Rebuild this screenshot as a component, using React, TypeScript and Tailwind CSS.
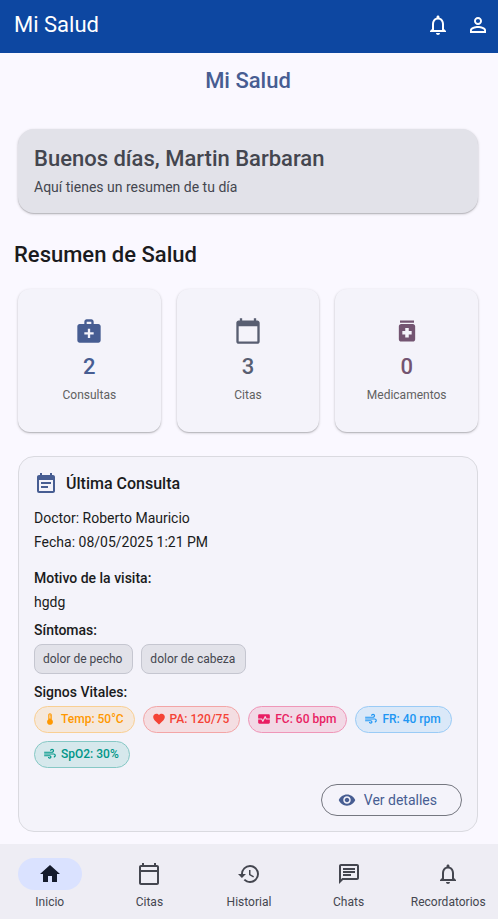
import type { ReactNode } from "react";
import type { IconType } from "react-icons";
import {
    MdAir,
    MdCalendarToday,
    MdDeviceThermostat,
    MdEventNote,
    MdFavorite,
    MdHistory,
    MdHome,
    MdMedicalServices,
    MdMedication,
    MdMonitorHeart,
    MdNotificationsNone,
    MdOutlineCalendarToday,
    MdOutlineChat,
    MdPersonOutline,
    MdVisibility,
} from "react-icons/md";

type Stat = { label: string; value: number; icon: IconType; color: string };
type Vital = { label: string; icon: IconType; color: string };
type NavItem = { label: string; icon: IconType; active?: boolean };

const stats: Stat[] = [
    { label: "Consultas", value: 2, icon: MdMedicalServices, color: "text-[#475d92]" },
    { label: "Citas", value: 3, icon: MdCalendarToday, color: "text-[#585e71]" },
    { label: "Medicamentos", value: 0, icon: MdMedication, color: "text-[#735471]" },
];

const symptoms = ["dolor de pecho", "dolor de cabeza"];

const vitals: Vital[] = [
    { label: "Temp: 50°C", icon: MdDeviceThermostat, color: "border-[#f9cf93] bg-[#f5e8dc] text-[#ff9800]" },
    { label: "PA: 120/75", icon: MdFavorite, color: "border-[#f3a5a6] bg-[#f4dee2] text-[#f44336]" },
    { label: "FC: 60 bpm", icon: MdMonitorHeart, color: "border-[#ef96b8] bg-[#f2d9e6] text-[#e91e63]" },
    { label: "FR: 40 rpm", icon: MdAir, color: "border-[#9acbf6] bg-[#dae8f8] text-[#2196f3]" },
    { label: "SpO2: 30%", icon: MdAir, color: "border-[#86c8c5] bg-[#d6e8ec] text-[#009688]" },
];

const navItems: NavItem[] = [
    { label: "Inicio", icon: MdHome, active: true },
    { label: "Citas", icon: MdOutlineCalendarToday },
    { label: "Historial", icon: MdHistory },
    { label: "Chats", icon: MdOutlineChat },
    { label: "Recordatorios", icon: MdNotificationsNone },
];

const Header = () => (
    <header className="flex h-[53px] items-center justify-between bg-[#0d47a1] pr-2 pl-3.5 pb-1 text-white">
        <span className="text-[22px] leading-7">Mi Salud</span>
        <div className="flex items-center gap-4">
            <button type="button" aria-label="Notificaciones">
                <MdNotificationsNone className="size-6" />
            </button>
            <button type="button" aria-label="Perfil">
                <MdPersonOutline className="size-6" />
            </button>
        </div>
    </header>
);

const StatCard = ({ stat }: { stat: Stat }) => {
    const Icon = stat.icon;
    return (
        <div className="flex aspect-square flex-col items-center justify-center rounded-xl bg-[#f4f3fa] shadow-[0_1px_3px_rgba(0,0,0,0.2),0_1px_1px_rgba(0,0,0,0.14)]">
            <Icon className={`size-7 ${stat.color}`} />
            <span className={`mt-2 text-[22px] leading-7 font-medium ${stat.color}`}>{stat.value}</span>
            <span className="mt-1.5 text-xs leading-4 text-[#616161]">{stat.label}</span>
        </div>
    );
};

const FieldTitle = ({ children }: { children: ReactNode }) => (
    <h4 className="text-sm leading-5 font-medium text-[#1a1b20]">{children}</h4>
);

const LastVisit = () => (
    <section className="mx-1 mt-6 rounded-2xl border border-[#dadae0] bg-[#f4f3fa] p-[15px]">
        <h3 className="flex items-center gap-2 text-base leading-6 font-medium text-[#1a1b20]">
            <MdEventNote className="size-6 text-[#475d92]" />
            Última Consulta
        </h3>
        <div className="mt-3 space-y-1 text-sm leading-5 text-[#1a1b20]">
            <p>Doctor: Roberto Mauricio</p>
            <p>Fecha: 08/05/2025 1:21 PM</p>
        </div>
        <div className="mt-4 space-y-1">
            <FieldTitle>Motivo de la visita:</FieldTitle>
            <p className="text-sm leading-5 text-[#1a1b20]">hgdg</p>
        </div>
        <div className="mt-2">
            <FieldTitle>Síntomas:</FieldTitle>
            <ul className="mt-1 flex flex-wrap gap-2">
                {symptoms.map((symptom) => (
                    <li key={symptom} className="rounded-lg border border-[#c5c6d0] bg-[#e2e2e9] py-1.5 pr-2.5 pl-2 text-xs leading-4 text-[#44464f]">
                        {symptom}
                    </li>
                ))}
            </ul>
        </div>
        <div className="mt-2">
            <FieldTitle>Signos Vitales:</FieldTitle>
            <ul className="mt-1 flex flex-wrap gap-2">
                {vitals.map(({ label, icon: Icon, color }) => (
                    <li key={label} className={`flex h-[27px] items-center gap-1 rounded-full border pr-2.5 pl-2 text-xs leading-4 font-medium ${color}`}>
                        <Icon className="size-3.5" />
                        {label}
                    </li>
                ))}
            </ul>
        </div>
        <div className="mt-4 flex justify-end">
            <button type="button" className="flex h-8 items-center gap-2 rounded-full border border-[#757780] pr-6 pl-4 text-sm leading-5 text-[#475d92]">
                <MdVisibility className="size-[18px]" />
                Ver detalles
            </button>
        </div>
    </section>
);

const BottomNav = () => (
    <nav className="bg-[#eeedf4] pt-3.5 pb-[9px]">
        <ul className="grid grid-cols-5">
            {navItems.map(({ label, icon: Icon, active }) => (
                <li key={label}>
                    <a href="#" className="flex flex-col items-center gap-1 text-xs leading-4 text-[#44464f]">
                        <span className={active ? "flex h-8 w-16 items-center justify-center rounded-full bg-[#dae2ff] text-[#151b2c]" : "flex h-8 w-16 items-center justify-center"}>
                            <Icon className="size-6" />
                        </span>
                        {label}
                    </a>
                </li>
            ))}
        </ul>
    </nav>
);

const App = () => {
    return (
        <div className="flex min-h-screen flex-col bg-[#faf8ff] font-[Roboto,sans-serif]">
            <Header />
            <main className="flex-1 pt-3.5 pr-4 pb-3 pl-3.5">
                <h1 className="text-center text-[22px] leading-7 font-medium text-[#475d92]">Mi Salud</h1>
                <section className="mx-1 mt-[34px] rounded-2xl bg-[#e2e2e9] p-4 text-[#44464f] shadow-[0_1px_3px_rgba(0,0,0,0.2),0_1px_1px_rgba(0,0,0,0.14)]">
                    <h2 className="text-[22px] leading-7 font-medium">Buenos días, Martin Barbaran</h2>
                    <p className="mt-1 text-sm leading-5">Aquí tienes un resumen de tu día</p>
                </section>
                <h2 className="mt-7 text-[22px] leading-7 font-medium text-[#1a1b20]">Resumen de Salud</h2>
                <div className="mx-1 mt-5 grid grid-cols-3 gap-4">
                    {stats.map((stat) => (
                        <StatCard key={stat.label} stat={stat} />
                    ))}
                </div>
                <LastVisit />
            </main>
            <BottomNav />
        </div>
    );
};

export default App;
